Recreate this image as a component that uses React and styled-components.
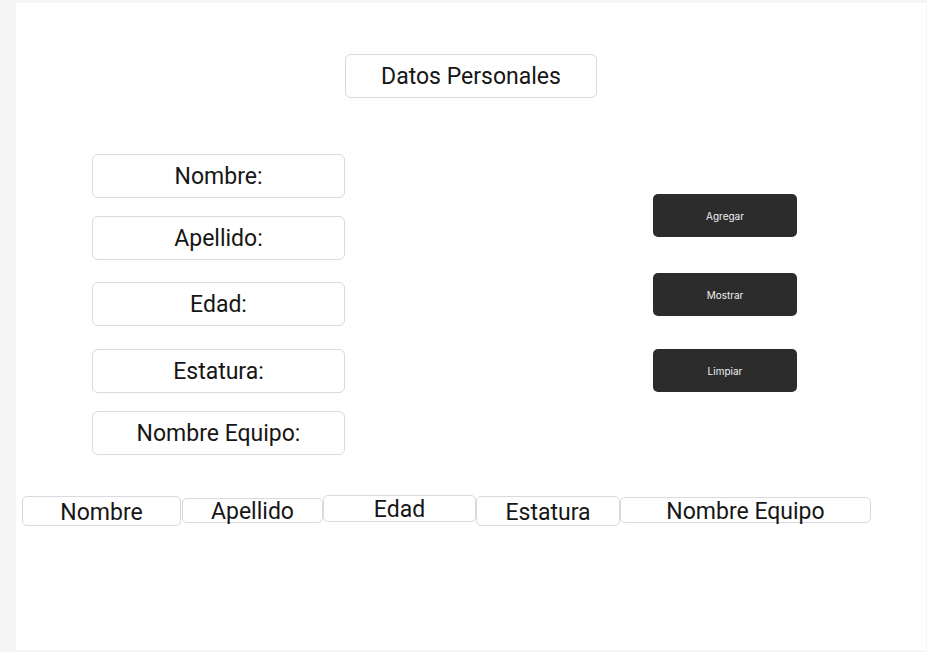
import styled, { createGlobalStyle } from 'styled-components';

const GlobalStyle = createGlobalStyle`
  html, body {
    margin: 0;
    padding: 0;
    background: #f5f5f5;
  }
  body {
    font-family: Roboto, "Liberation Sans", sans-serif;
    color: #161616;
  }
`;

const Page = styled.div`
  width: 927px;
  height: 652px;
  padding: 3px 1px 2px 16px;
  box-sizing: border-box;
`;

const Panel = styled.div`
  width: 910px;
  height: 647px;
  background: #ffffff;
  padding-top: 51px;
  box-sizing: border-box;
  display: flex;
  flex-direction: column;
`;

const Header = styled.div`
  align-self: center;
  width: 252px;
  height: 44px;
  border: 1px solid #d9d9de;
  border-radius: 6px;
  box-sizing: border-box;
  display: flex;
  align-items: center;
  justify-content: center;
  font-size: 23px;
  padding-top: 1px;
`;

const FormArea = styled.div`
  display: flex;
  align-items: flex-start;
  margin-top: 56px;
  padding-left: 76px;
`;

const Labels = styled.div`
  display: flex;
  flex-direction: column;
  width: 253px;
`;

const Label = styled.div`
  height: 44px;
  margin-top: ${(p) => p.$gap || 0}px;
  border: 1px solid #d9d9de;
  border-radius: 6px;
  box-sizing: border-box;
  display: flex;
  align-items: center;
  justify-content: center;
  font-size: 23px;
`;

const Actions = styled.div`
  display: flex;
  flex-direction: column;
  width: 144px;
  margin-left: 308px;
  padding-top: 40px;
`;

const Button = styled.button`
  height: 43px;
  margin-top: ${(p) => p.$gap || 0}px;
  border: none;
  border-radius: 5px;
  background: #2c2c2c;
  color: #f0f0f0;
  font-family: Inter, "Noto Sans", sans-serif;
  font-size: 10px;
  cursor: pointer;
`;

const TableHead = styled.div`
  display: flex;
  align-items: flex-start;
  margin-top: 40px;
  padding-left: 6px;
`;

const HeadCell = styled.div`
  width: ${(p) => p.$w}px;
  height: ${(p) => p.$h}px;
  margin-top: ${(p) => p.$top}px;
  margin-left: ${(p) => p.$left || 0}px;
  padding-top: 2px;
  border: 1px solid #d9d9de;
  border-radius: 5px;
  box-sizing: border-box;
  display: flex;
  align-items: center;
  justify-content: center;
  font-size: 23px;
  line-height: 1;
`;

const columns = [
  { text: 'Nombre', w: 159, h: 30, top: 1 },
  { text: 'Apellido', w: 141, h: 25, top: 3, left: 1 },
  { text: 'Edad', w: 153, h: 27, top: 0 },
  { text: 'Estatura', w: 144, h: 30, top: 1 },
  { text: 'Nombre Equipo', w: 251, h: 26, top: 2 },
];

export default function App() {
  return (
    <>
      <GlobalStyle />
      <Page>
        <Panel>
          <Header>Datos Personales</Header>

          <FormArea>
            <Labels>
              <Label>Nombre:</Label>
              <Label $gap={18}>Apellido:</Label>
              <Label $gap={22}>Edad:</Label>
              <Label $gap={23}>Estatura:</Label>
              <Label $gap={18}>Nombre Equipo:</Label>
            </Labels>

            <Actions>
              <Button>Agregar</Button>
              <Button $gap={36}>Mostrar</Button>
              <Button $gap={33}>Limpiar</Button>
            </Actions>
          </FormArea>

          <TableHead>
            {columns.map((c) => (
              <HeadCell key={c.text} $w={c.w} $h={c.h} $top={c.top} $left={c.left}>
                {c.text}
              </HeadCell>
            ))}
          </TableHead>
        </Panel>
      </Page>
    </>
  );
}
